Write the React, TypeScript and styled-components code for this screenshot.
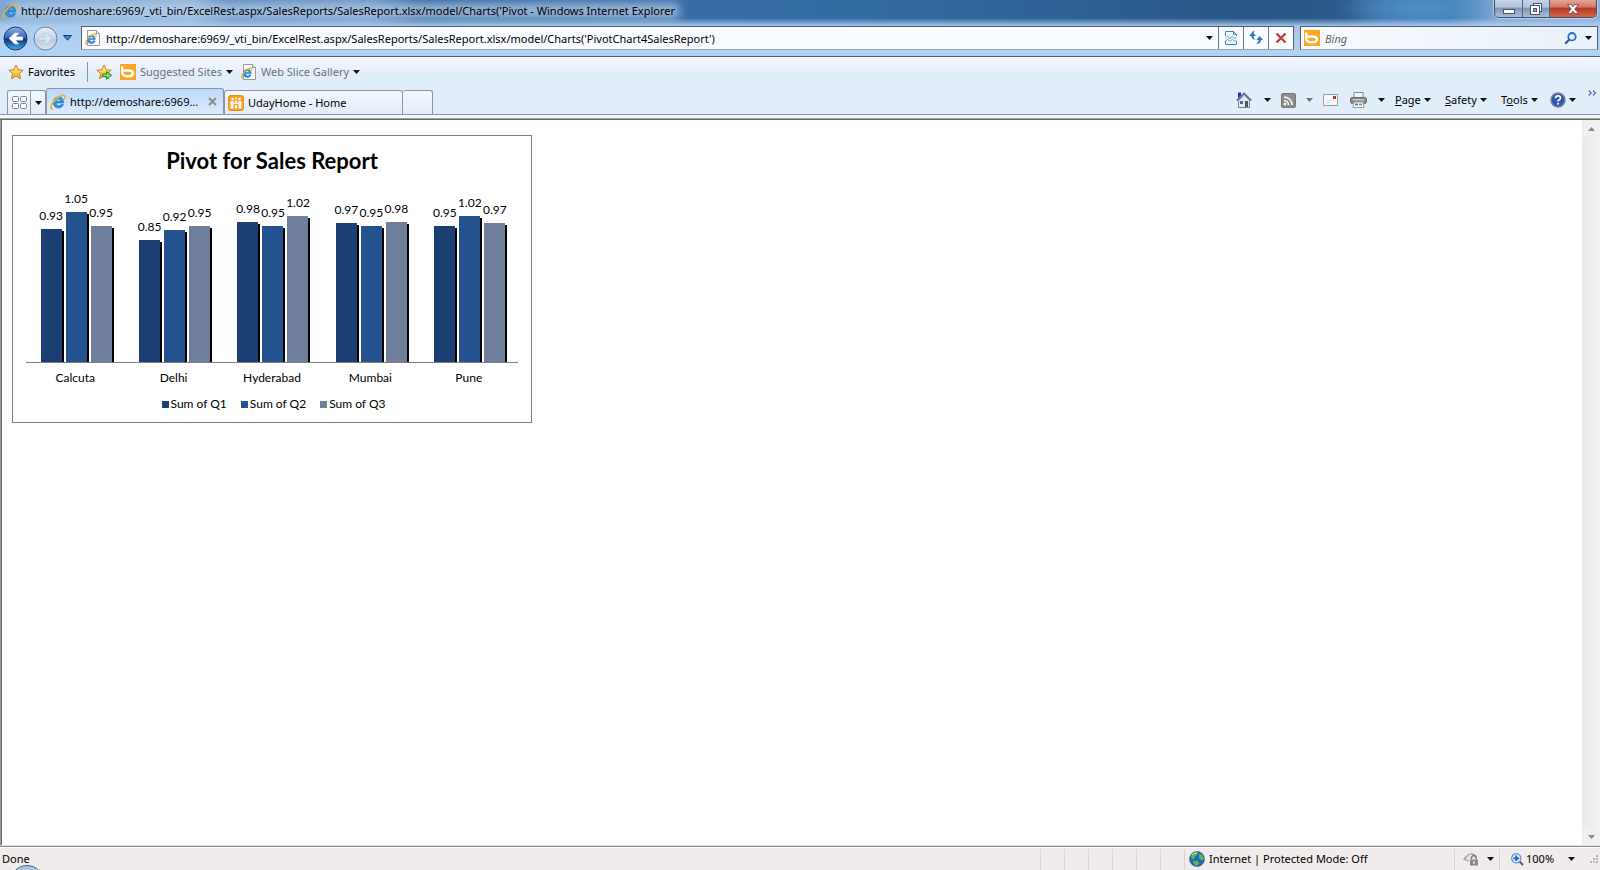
import React from "react";
import styled, { createGlobalStyle, css } from "styled-components";

const GlobalStyle = createGlobalStyle`
  *, *::before, *::after { box-sizing: border-box; }
  body { margin: 0; background: #fff; }
  body, button, input { font-family: "Noto Sans", "Open Sans", sans-serif; font-size: 11px; line-height: 16px; color: #000; }
  button { border: 0; padding: 0; background: none; }
  svg { display: block; flex: none; }
`;

const Window = styled.div`
  min-height: 100vh;
  display: flex;
  flex-direction: column;
  overflow: hidden;
`;

/* ---------- glass frame ---------- */
const Frame = styled.header`
  background:
    linear-gradient(to bottom, transparent 18px, rgba(176, 208, 243, 0.9) 26px, #b3d3f5 52px, #acd0f5 56px),
    radial-gradient(ellipse 90px 26px at 1420px 8px, #4f8fc8, transparent),
    linear-gradient(to right, #7ba5d3 0, #8fb2d9 190px, #5b87bb 230px, #6892c4 370px, #35669f 420px, #3b6ca8 640px, #326ca3 840px, #2e6195 1060px, #285685 1250px, #2b5a8c 1350px, #3a6ea3 1380px, #3f7bb1 1450px, #7ea6d3 1490px, #8fb0d6 100%);
  border-bottom: 1px solid #4f6075;
`;
const TitleBar = styled.div`
  height: 25px;
  padding: 0 3px 0 2px;
  display: flex;
  align-items: flex-start;
  justify-content: space-between;
`;
const Title = styled.h1`
  position: relative;
  isolation: isolate;
  margin: 3px 0 0;
  display: flex;
  align-items: center;
  gap: 3px;
  font-size: 11px;
  font-weight: 400;
  line-height: 16px;
  white-space: nowrap;
  &::before {
    content: "";
    position: absolute;
    z-index: -1;
    inset: 0 -4px 0 8px;
    background: rgba(190, 212, 236, 0.7);
    filter: blur(5px);
  }
`;
const WindowControls = styled.div`
  display: flex;
  height: 18px;
  border: 1px solid #3c4f68;
  border-top: 0;
  border-radius: 0 0 5px 5px;
  overflow: hidden;
  box-shadow: 0 0 1px 1px rgba(230, 242, 255, 0.6);
`;
const WindowButton = styled.button<{ $close?: boolean }>`
  width: ${(p) => (p.$close ? 47 : 27)}px;
  display: flex;
  align-items: center;
  justify-content: center;
  background: linear-gradient(#c3d3e6 0, #b2c4da 40%, #8099b9 50%, #a8bedb 100%);
  & + & { border-left: 1px solid #52657e; }
  ${(p) => p.$close && css`
    background: linear-gradient(#e3a698 0, #d27767 40%, #b93a22 50%, #d3674b 100%);
  `}
`;

const NavRow = styled.div`
  height: 31px;
  padding: 1px 2px 6px 3px;
  display: flex;
  align-items: center;
`;
const HistoryButtons = styled.div`
  display: flex;
  align-items: center;
  gap: 5px;
  width: 78px;
`;
const Field = styled.div`
  height: 24px;
  display: flex;
  align-items: center;
  border: 1px solid #565f6b;
  border-bottom-color: #9aa7b7;
  background: #f8fbff;
`;
const AddressField = styled(Field)`
  flex: 1;
  padding-left: 3px;
`;
const SearchField = styled(Field)`
  width: 298px;
  margin-left: 6px;
  padding: 0 0 0 3px;
  background: linear-gradient(to right, #f8fbff, #e9f1fa);
`;
const TextInput = styled.input`
  flex: 1;
  min-width: 0;
  height: 20px;
  border: 0;
  padding: 0 0 0 5px;
  background: none;
  outline: 0;
  &::placeholder { color: #5f6368; font-style: italic; opacity: 1; }
`;
const FieldButton = styled.button<{ $divided?: boolean }>`
  height: 22px;
  width: ${(p) => (p.$divided ? 25 : 18)}px;
  display: flex;
  align-items: center;
  justify-content: center;
  ${(p) => p.$divided && css`border-left: 1px solid #6b7480;`}
`;

/* ---------- favourites bar, tabs and commands ---------- */
const Bars = styled.div`
  background: linear-gradient(#fff 0, #f2f6fd 1px, #eaf1fb 13px, #e1edf9 14px);
`;
const FavoritesBar = styled.nav`
  height: 31px;
  padding: 0 8px 2px;
  display: flex;
  align-items: center;
`;
const BarButton = styled.button<{ $muted?: boolean }>`
  display: flex;
  align-items: center;
  gap: 4px;
  white-space: nowrap;
  color: ${(p) => (p.$muted ? "#6d7278" : "#000")};
`;
const Divider = styled.span`
  width: 1px;
  height: 20px;
  margin: 0 8px 0 12px;
  background: #8a96a3;
`;
const LinkGroup = styled.div`
  display: flex;
  align-items: center;
  gap: 8px;
`;
const TabRow = styled.div`
  height: 27px;
  padding-left: 7px;
  display: flex;
  align-items: flex-end;
  border-bottom: 1px solid #8695ab;
`;
const QuickTabs = styled.div`
  height: 24px;
  width: 39px;
  display: flex;
  border: 1px solid #8c96a3;
  border-bottom: 0;
  border-radius: 3px 3px 0 0;
  background: linear-gradient(#f4f8fd, #e3edf9);
`;
const QuickButton = styled.button<{ $wide?: boolean }>`
  flex: ${(p) => (p.$wide ? "0 0 22px" : "1")};
  display: flex;
  align-items: center;
  justify-content: center;
  & + & { border-left: 1px solid #8c96a3; }
`;
const Tab = styled.div<{ $active?: boolean; $width: number }>`
  width: ${(p) => p.$width}px;
  height: ${(p) => (p.$active ? 26 : 24)}px;
  padding: 0 6px 0 3px;
  display: flex;
  align-items: center;
  gap: 4px;
  border: 1px solid #8c96a3;
  border-bottom: 0;
  border-radius: 3px 3px 0 0;
  background: ${(p) => (p.$active ? "linear-gradient(#bcd9f9, #dcebfc)" : "linear-gradient(#f3f7fd, #e3edf9)")};
  a { flex: 1; color: #000; text-decoration: none; white-space: nowrap; }
`;
const NewTab = styled.button`
  width: 30px;
  height: 24px;
  border: 1px solid #8c96a3;
  border-bottom: 0;
  border-left: 0;
  border-radius: 3px 3px 0 0;
  background: linear-gradient(#f3f7fd, #e3edf9);
`;
const Commands = styled.div`
  margin-left: auto;
  height: 26px;
  padding: 0 3px 2px 0;
  display: flex;
  align-items: center;
`;
const Command = styled.button<{ $width: number }>`
  width: ${(p) => p.$width}px;
  height: 20px;
  display: flex;
  align-items: center;
  gap: 3px;
  white-space: nowrap;
`;
const IconCommand = styled(Command)`
  justify-content: space-between;
  padding-right: 10px;
`;
const Overflow = styled.button`
  align-self: flex-start;
  padding-top: 2px;
  margin-left: 12px;
`;
const Edge = styled.div`
  height: 5px;
  background: #f4f8fd;
  border-bottom: 1px solid #696969;
  box-shadow: inset 0 -1px #a0a0a0;
`;

/* ---------- page ---------- */
const Viewport = styled.div`
  flex: 1;
  display: flex;
  padding-left: 1px;
  border-left: 1px solid #a0a0a0;
  border-bottom: 1px solid #e3e3e3;
  box-shadow: inset 1px 0 #696969;
`;
const Page = styled.main`
  flex: 1;
  padding: 15px 10px;
`;
const Scrollbar = styled.div`
  width: 18px;
  padding: 0 1px;
  display: flex;
  flex-direction: column;
  justify-content: space-between;
  background: linear-gradient(to right, #e9e9e9, #f3f3f3);
`;
const ScrollButton = styled.button`
  height: 17px;
  display: flex;
  align-items: center;
  justify-content: center;
  background: #f0f0f0;
`;

/* ---------- chart ---------- */
const Chart = styled.figure`
  margin: 0;
  width: 520px;
  height: 288px;
  padding: 10px 13px 0;
  border: 1px solid #7f7f7f;
  font-family: Lato, "Open Sans", sans-serif;
  font-size: 12px;
  line-height: 16px;
`;
const ChartTitle = styled.figcaption`
  font-size: 22px;
  line-height: 30px;
  font-weight: 700;
  text-align: center;
`;
const Plot = styled.div`
  height: 187px;
  display: grid;
  grid-template-columns: repeat(5, 1fr);
  border-bottom: 1px solid #7f7f7f;
`;
const Group = styled.div`
  padding-left: 2px;
  display: flex;
  align-items: flex-end;
  justify-content: center;
  gap: 4px;
`;
const Column = styled.div`
  width: 21px;
  display: flex;
  flex-direction: column;
  align-items: center;
  gap: 5px;
`;
const Bar = styled.div<{ $color: string }>`
  position: relative;
  width: 21px;
  background: ${(p) => p.$color};
  &::after {
    content: "";
    position: absolute;
    left: 100%;
    top: 2px;
    bottom: 0;
    width: 2px;
    background: #000;
  }
`;
const Categories = styled.div`
  height: 33px;
  padding-top: 7px;
  display: grid;
  grid-template-columns: repeat(5, 1fr);
  text-align: center;
`;
const Legend = styled.ul`
  margin: 0;
  padding: 0 0 0 3px;
  list-style: none;
  display: flex;
  justify-content: center;
  gap: 14px;
`;
const LegendItem = styled.li<{ $color: string }>`
  display: flex;
  align-items: center;
  gap: 2px;
  &::before {
    content: "";
    width: 7px;
    height: 7px;
    background: ${(p) => p.$color};
  }
`;

/* ---------- status bar ---------- */
const StatusBar = styled.footer`
  position: relative;
  height: 24px;
  padding: 1px 2px 0 0;
  border-top: 1px solid #8a8a8a;
  box-shadow: inset 0 1px #fff;
  background: #f0eceb;
  display: flex;
  align-items: center;
  overflow: hidden;
`;
const StatusText = styled.span`
  flex: 1;
  padding-left: 2px;
`;
const StatusCell = styled.div<{ $width: number }>`
  width: ${(p) => p.$width}px;
  height: 21px;
  padding-left: ${(p) => (p.$width > 24 ? 4 : 0)}px;
  display: flex;
  align-items: center;
  gap: 4px;
  border-left: 1px solid #d5d5d5;
`;
const ZoomCell = styled(StatusCell)`
  padding-left: 11px;
  gap: 2px;
  button { margin-left: 12px; }
`;
const LockCell = styled(StatusCell)`
  padding-left: 8px;
  gap: 8px;
`;
const Orb = styled.span`
  position: absolute;
  left: 10px;
  top: 18px;
  width: 34px;
  height: 34px;
  border: 1px solid #3f6a98;
  border-radius: 50%;
  background: #a9c6de;
`;

/* ---------- icons ---------- */
const Arrow = ({ color = "#111" }: { color?: string }) => (
  <svg width="7" height="4" viewBox="0 0 7 4"><path d="M0 0h7L3.500 4z" fill={color} /></svg>
);
const IeMark = () => (
  <>
    <path d="M13.600 9H6.100c.1 1.900 1.300 2.700 2.600 2.700 1.100 0 1.800-.4 2.200-1.200h2.500c-.8 2.300-2.600 3.500-4.800 3.500-3.200 0-5.400-2.200-5.400-5.400S5.400 3 8.600 3c3.300 0 5.400 2.500 5 6zM6.200 7.200h4.800c-.1-1.400-1.100-2.200-2.400-2.200-1.300 0-2.200.8-2.400 2.200z" fill="#2b96ea" stroke="#1667b4" strokeWidth=".6" />
    <path d="M2.900 14.700C-.5 15.700.2 10.800 4.600 6.400 8.400 2.400 13.300.3 14.600 1.700c.6.700.3 1.900-.5 3.300" fill="none" stroke="#f2b01c" strokeWidth="1.600" />
  </>
);
const IeIcon = () => <svg width="16" height="16" viewBox="0 0 16 16"><IeMark /></svg>;
const PageIcon = () => (
  <svg width="16" height="16" viewBox="0 0 16 16">
    <path d="M2.500.5h9l3 3v12h-12z" fill="#fafafa" stroke="#9a9a9a" />
    <path d="M11.500.5v3h3" fill="#e3e3e3" stroke="#9a9a9a" />
    <g transform="translate(0 3) scale(.75)"><IeMark /></g>
  </svg>
);
const BingIcon = () => (
  <svg width="16" height="16" viewBox="0 0 16 16">
    <rect width="16" height="16" fill="#ffa51f" />
    <path d="M2.200 2.500v7" stroke="#fff" strokeWidth="2.400" />
    <path d="M2.200 6.500h6c2.800 0 4.800 1 4.800 2.800s-2 3-5 3-5.500-1.200-5.500-3" fill="none" stroke="#fff" strokeWidth="2.400" />
  </svg>
);
const StarIcon = ({ add }: { add?: boolean }) => (
  <svg width="16" height="16" viewBox="0 0 16 16">
    <defs><linearGradient id="star" x1="0" y1="0" x2="0" y2="1"><stop offset="0" stopColor="#fff3a0" /><stop offset="1" stopColor="#f7a81b" /></linearGradient></defs>
    <path d="M8 1l2.100 4.700 5.100.5-3.900 3.400 1.200 5.100L8 12l-4.500 2.700 1.200-5.100L.8 6.200l5.100-.5z" fill="url(#star)" stroke="#c98518" />
    {add && <path d="M6.500 10h4V7.500l5 3.800-5 3.800v-2.500h-4z" fill="#7be05c" stroke="#1f8a22" />}
  </svg>
);
const NavCircle = ({ disabled }: { disabled?: boolean }) => {
  const id = disabled ? "fwd" : "back";
  return (
    <svg width="25" height="25" viewBox="0 0 25 25">
      <defs>
        <linearGradient id={id} x1="0" y1="0" x2="0" y2="1">
          <stop offset="0" stopColor={disabled ? "#e6eef8" : "#8fb6e8"} />
          <stop offset=".48" stopColor={disabled ? "#c9d7e8" : "#2c62b4"} />
          <stop offset=".52" stopColor={disabled ? "#b9cade" : "#0c2f7c"} />
          <stop offset="1" stopColor={disabled ? "#d8e6f4" : "#3fb2f0"} />
        </linearGradient>
      </defs>
      <circle cx="12.500" cy="12.500" r="11.500" fill={`url(#${id})`} stroke={disabled ? "#6b7f99" : "#1f3560"} />
      {disabled
        ? <path d="M5.500 11h7.300L9.500 7.200h3.700l5.600 5.300-5.600 5.300H9.500l3.300-3.800H5.500z" fill="#dce6f0" stroke="#b8c7d8" strokeWidth=".7" />
        : <path d="M19.500 11h-7.300l3.300-3.800h-3.700l-5.600 5.300 5.600 5.300h3.700L12.200 14h7.300z" fill="#fff" stroke="#fff" strokeWidth=".8" />}
    </svg>
  );
};
const HistoryArrow = () => (
  <svg width="9" height="6" viewBox="0 0 9 6"><path d="M.5.500h8L4.500 5.200z" fill="#3f8ad8" stroke="#0c3f7c" /></svg>
);
const CompatIcon = () => (
  <svg width="12" height="14" viewBox="0 0 12 14" fill="none" stroke="#3a86c0">
    <path d="M.5 5V.5h8l3 3V5M.5 10v3.500h11V10M8.500.5v3h3" />
    <path d="M.5 7L2.500 5.200l2.500 2.300L7.500 5.200l2.500 2.300 1.500-1.300M.5 10l2-1.800L5 10.500l2.500-2.300L10 10.500l1.500-1.300" stroke="#58a0d4" />
  </svg>
);
const RefreshIcon = () => (
  <svg width="14" height="14" viewBox="0 0 14 14" fill="#2f78c8">
    <path d="M0 5L3 1.500V1c1-1 2-1 3-1-1 .8-1.300 1.500-1.300 2.500L7 5H4.700c0 1.800.5 3 1.800 4C3.500 8.500 2.300 7 2.300 5z" />
    <path d="M14 9l-3.300-4L7.500 9h2c0 1.700-1 3-2.500 4 3 0 5-1.500 5-4z" />
  </svg>
);
const StopIcon = () => (
  <svg width="12" height="12" viewBox="0 0 12 12"><path d="M1.500 1.500l9 9M10.500 1.500l-9 9" stroke="#c6383c" strokeWidth="2.300" /></svg>
);
const SearchIcon = () => (
  <svg width="13" height="13" viewBox="0 0 13 13" fill="none">
    <circle cx="8" cy="4.700" r="3.700" stroke="#2a6fc0" strokeWidth="1.800" />
    <path d="M5.300 7.500L1.200 11.800" stroke="#2a5fae" strokeWidth="2.200" />
  </svg>
);
const GridIcon = () => (
  <svg width="15" height="13" viewBox="0 0 15 13" fill="#fff" stroke="#7a8290">
    <rect x=".5" y=".5" width="6" height="5" rx="1" /><rect x="8.500" y=".5" width="6" height="5" rx="1" />
    <rect x=".5" y="7.500" width="6" height="5" rx="1" /><rect x="8.500" y="7.500" width="6" height="5" rx="1" />
  </svg>
);
const SiteIcon = () => (
  <svg width="16" height="16" viewBox="0 0 16 16">
    <rect x=".5" y=".5" width="15" height="15" rx="2" fill="#ff9d1c" stroke="#f08a10" />
    <g fill="#fff"><circle cx="4.500" cy="4" r="1.300" /><circle cx="11.500" cy="4" r="1.300" /><circle cx="8" cy="3.500" r="1" />
      <path d="M2.500 6h3.200v3H5.500v4.500h-3zM13.500 6h-3.200v3h.2v4.500h3zM7.300 5.500h1.400v2H10v1.300H6V7.500h1.300zM7 10h2v3.500H7z" /></g>
  </svg>
);
const CloseTabIcon = () => (
  <svg width="9" height="9" viewBox="0 0 9 9"><path d="M1 1l7 7M8 1L1 8" stroke="#8c8c8c" strokeWidth="2" /></svg>
);
const HomeIcon = () => (
  <svg width="16" height="16" viewBox="0 0 16 16">
    <path d="M2.500 8.500L8.500 3l5 5.500v7h-11z" fill="#e6e8ee" stroke="#777f90" />
    <path d="M.8 8.500L8 1.300l7.400 7.200" fill="none" stroke="#5b6580" strokeWidth="1.600" />
    <path d="M2 .5h3v3L2 6z" fill="#2530b8" />
    <rect x="4" y="9" width="3" height="3" fill="#4a6aa8" /><rect x="9" y="9" width="3" height="6" fill="#505868" />
  </svg>
);
const RssIcon = () => (
  <svg width="15" height="15" viewBox="0 0 15 15">
    <rect x=".5" y=".5" width="14" height="14" rx="1.500" fill="#8e8e8e" stroke="#777" />
    <g fill="none" stroke="#fff" strokeWidth="1.500"><path d="M3 7.500a4.500 4.500 0 014.500 4.500M3 4a8 8 0 018 8" /></g>
    <circle cx="4" cy="11" r="1.300" fill="#fff" />
  </svg>
);
const MailIcon = () => (
  <svg width="15" height="12" viewBox="0 0 15 12">
    <rect x=".5" y=".5" width="14" height="11" fill="#f7f7f7" stroke="#9d9d9d" />
    <rect x="10" y="2" width="3" height="3" fill="#d4292c" /><path d="M3 6.500h5M3 8.500h4" stroke="#ddd" />
  </svg>
);
const PrintIcon = () => (
  <svg width="17" height="16" viewBox="0 0 17 16">
    <rect x="4" y=".5" width="9" height="6" fill="#f2f2f2" stroke="#8c8c8c" />
    <rect x=".5" y="5.500" width="16" height="6" rx="2" fill="#8a8a8a" stroke="#666" />
    <rect x="3" y="7" width="11" height="1.500" fill="#c4c4c4" />
    <path d="M4 10h9l1 5.500H3z" fill="#fff" stroke="#999" /><path d="M5 12.500h3" stroke="#3d8ad4" strokeWidth="2" /><path d="M9 12.500h3" stroke="#6db36d" strokeWidth="2" />
  </svg>
);
const HelpIcon = () => (
  <svg width="16" height="16" viewBox="0 0 16 16">
    <circle cx="8" cy="8" r="7" fill="#3056b4" stroke="#79839a" strokeWidth="1.500" />
    <path d="M5.500 6.300C5.500 3 10.700 3.200 10.500 6c-.1 1.700-2.500 1.800-2.500 3.600" fill="none" stroke="#fff" strokeWidth="1.700" />
    <rect x="7.100" y="10.800" width="1.800" height="1.800" fill="#fff" />
  </svg>
);
const ChevronsIcon = () => (
  <svg width="9" height="6" viewBox="0 0 9 6"><path d="M.7.500L3.200 3 .7 5.500M5 .5L7.500 3 5 5.500" fill="none" stroke="#5a6fae" strokeWidth="1.200" /></svg>
);
const GlobeIcon = () => (
  <svg width="16" height="16" viewBox="0 0 16 16">
    <circle cx="8" cy="8" r="7.500" fill="#2a62c0" stroke="#35507c" strokeWidth=".6" />
    <path d="M2 4.500C4 1.500 7 .8 9 1.200L8 4 5.500 6 5 8.500 2.500 7.500zM10 3l3.500 1 1.500 4-2.500 1.500L10 7zM4 10l4-.5 2.500 2.500L8 15l-3-1.500z" fill="#4fc043" />
    <path d="M3.500 4C5 2 7 1.700 8 2" stroke="#c9f0d0" fill="none" />
  </svg>
);
const LockIcon = () => (
  <svg width="16" height="14" viewBox="0 0 16 14">
    <path d="M13 5.500A5 5 0 004 4l-3 3 4.500 2" fill="#e4e4e4" stroke="#9a9a9a" strokeWidth="1.200" />
    <path d="M8.500 7.500V6a2.300 2.300 0 014.600 0v1.500" fill="none" stroke="#777" strokeWidth="1.300" />
    <rect x="7" y="7.500" width="8" height="6" fill="#8a8a8a" />
    <rect x="10.300" y="9" width="1.400" height="3" fill="#e4e4e4" />
  </svg>
);
const ZoomIcon = () => (
  <svg width="13" height="13" viewBox="0 0 13 13">
    <path d="M8 8l4 4" stroke="#6a5a50" strokeWidth="2" />
    <circle cx="5.300" cy="5.300" r="4.600" fill="#d5e8fc" stroke="#5d8fcc" strokeWidth="1.200" />
    <path d="M5.300 2.500v5.600M2.500 5.300h5.600" stroke="#1560c8" strokeWidth="1.800" />
  </svg>
);
const GripIcon = () => (
  <svg width="9" height="9" viewBox="0 0 9 9" fill="#b8b4b2">
    <path d="M7 0h2v2H7zM7 3h2v2H7zM4 3h2v2H4zM7 6h2v2H7zM4 6h2v2H4zM1 6h2v2H1z" />
  </svg>
);
const MinimizeIcon = () => (
  <svg width="12" height="10" viewBox="0 0 12 10"><rect x=".5" y="5.500" width="11" height="4" fill="#fff" stroke="#4c5668" /></svg>
);
const RestoreIcon = () => (
  <svg width="13" height="12" viewBox="0 0 13 12" fill="#fff" stroke="#4c5668">
    <rect x="3.500" y=".5" width="8" height="8" /><rect x=".5" y="2.500" width="9" height="9" /><rect x="3.500" y="5.500" width="3" height="3" fill="#8fa6c2" />
  </svg>
);
const CloseIcon = () => (
  <svg width="12" height="10" viewBox="0 0 12 10"><path d="M.5.500h3.300L6 2.700 8.200.5h3.300L7.800 5l3.700 4.500H8.200L6 7.300 3.800 9.500H.5L4.200 5z" fill="#fff" stroke="#5e4450" strokeWidth=".8" /></svg>
);

const series = [
  { name: "Sum of Q1", color: "#1b3f72" },
  { name: "Sum of Q2", color: "#24528e" },
  { name: "Sum of Q3", color: "#6e7e9b" },
];
const cities = [
  { name: "Calcuta", values: [0.93, 1.05, 0.95] },
  { name: "Delhi", values: [0.85, 0.92, 0.95] },
  { name: "Hyderabad", values: [0.98, 0.95, 1.02] },
  { name: "Mumbai", values: [0.97, 0.95, 0.98] },
  { name: "Pune", values: [0.95, 1.02, 0.97] },
];
const PIXELS_PER_UNIT = 143;

function SalesChart() {
  return (
    <Chart>
      <ChartTitle>Pivot for Sales Report</ChartTitle>
      <Plot>
        {cities.map((city) => (
          <Group key={city.name}>
            {city.values.map((value, i) => (
              <Column key={series[i].name}>
                <span>{value.toFixed(2)}</span>
                <Bar $color={series[i].color} style={{ height: Math.round(value * PIXELS_PER_UNIT) }} />
              </Column>
            ))}
          </Group>
        ))}
      </Plot>
      <Categories>{cities.map((city) => <span key={city.name}>{city.name}</span>)}</Categories>
      <Legend>{series.map((s) => <LegendItem key={s.name} $color={s.color}>{s.name}</LegendItem>)}</Legend>
    </Chart>
  );
}

export default function App() {
  return (
    <Window>
      <GlobalStyle />
      <Frame>
        <TitleBar>
          <Title><IeIcon /><span>http://demoshare:6969/_vti_bin/ExcelRest.aspx/SalesReports/SalesReport.xlsx/model/Charts('Pivot - Windows Internet Explorer</span></Title>
          <WindowControls>
            <WindowButton aria-label="Minimize"><MinimizeIcon /></WindowButton>
            <WindowButton aria-label="Restore"><RestoreIcon /></WindowButton>
            <WindowButton $close aria-label="Close"><CloseIcon /></WindowButton>
          </WindowControls>
        </TitleBar>
        <NavRow>
          <HistoryButtons>
            <button aria-label="Back"><NavCircle /></button>
            <button aria-label="Forward"><NavCircle disabled /></button>
            <button aria-label="Recent pages"><HistoryArrow /></button>
          </HistoryButtons>
          <AddressField>
            <PageIcon />
            <TextInput aria-label="Address" defaultValue="http://demoshare:6969/_vti_bin/ExcelRest.aspx/SalesReports/SalesReport.xlsx/model/Charts('PivotChart4SalesReport')" />
            <FieldButton aria-label="Show addresses"><Arrow /></FieldButton>
            <FieldButton $divided aria-label="Compatibility view"><CompatIcon /></FieldButton>
            <FieldButton $divided aria-label="Refresh"><RefreshIcon /></FieldButton>
            <FieldButton $divided aria-label="Stop"><StopIcon /></FieldButton>
          </AddressField>
          <SearchField>
            <BingIcon />
            <TextInput aria-label="Search" placeholder="Bing" />
            <FieldButton aria-label="Search the web"><SearchIcon /></FieldButton>
            <FieldButton aria-label="Search options"><Arrow /></FieldButton>
          </SearchField>
        </NavRow>
      </Frame>

      <Bars>
        <FavoritesBar>
          <BarButton><StarIcon />Favorites</BarButton>
          <Divider />
          <LinkGroup>
            <BarButton aria-label="Add to favorites bar"><StarIcon add /></BarButton>
            <BarButton $muted><BingIcon />Suggested Sites <Arrow /></BarButton>
            <BarButton $muted><PageIcon />Web Slice Gallery <Arrow /></BarButton>
          </LinkGroup>
        </FavoritesBar>
        <TabRow>
          <QuickTabs>
            <QuickButton $wide aria-label="Quick tabs"><GridIcon /></QuickButton>
            <QuickButton aria-label="Tab list"><Arrow /></QuickButton>
          </QuickTabs>
          <Tab $active $width={178}>
            <IeIcon /><a href="#page">http://demoshare:6969...</a>
            <button aria-label="Close tab"><CloseTabIcon /></button>
          </Tab>
          <Tab $width={179}><SiteIcon /><a href="#home">UdayHome - Home</a></Tab>
          <NewTab aria-label="New tab" />
          <Commands>
            <IconCommand $width={45} aria-label="Home"><HomeIcon /><Arrow /></IconCommand>
            <IconCommand $width={42} aria-label="Feeds"><RssIcon /><Arrow color="#70757c" /></IconCommand>
            <Command $width={27} aria-label="Read mail"><MailIcon /></Command>
            <IconCommand $width={45} aria-label="Print"><PrintIcon /><Arrow /></IconCommand>
            <Command $width={50}><span><u>P</u>age</span><Arrow /></Command>
            <Command $width={56}><span><u>S</u>afety</span><Arrow /></Command>
            <Command $width={49}><span>T<u>o</u>ols</span><Arrow /></Command>
            <Command $width={26} aria-label="Help"><HelpIcon /><Arrow /></Command>
            <Overflow aria-label="More commands"><ChevronsIcon /></Overflow>
          </Commands>
        </TabRow>
        <Edge />
      </Bars>

      <Viewport>
        <Page id="page"><SalesChart /></Page>
        <Scrollbar>
          <ScrollButton aria-label="Scroll up"><svg width="7" height="4" viewBox="0 0 7 4"><path d="M0 4h7L3.500 0z" fill="#8a8a8a" /></svg></ScrollButton>
          <ScrollButton aria-label="Scroll down"><Arrow color="#8a8a8a" /></ScrollButton>
        </Scrollbar>
      </Viewport>

      <StatusBar>
        <StatusText>Done</StatusText>
        {[0, 1, 2, 3, 4, 5].map((n) => <StatusCell key={n} $width={24} />)}
        <StatusCell $width={270}><GlobeIcon />Internet | Protected Mode: Off</StatusCell>
        <LockCell $width={45}><LockIcon /><button aria-label="Security options"><Arrow /></button></LockCell>
        <ZoomCell $width={90}><ZoomIcon />100%<button aria-label="Zoom level"><Arrow /></button></ZoomCell>
        <GripIcon />
        <Orb />
      </StatusBar>
    </Window>
  );
}
